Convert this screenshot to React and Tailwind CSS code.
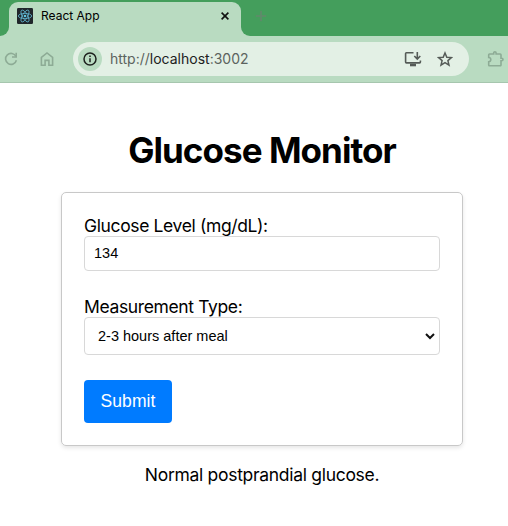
import React from "react";

function ReactLogo() {
  return (
    <svg width="16" height="16" viewBox="0 0 16 16" fill="none" stroke="#61b5d0" strokeWidth="0.8">
      <rect width="16" height="16" rx="1.2" fill="#20262b" stroke="none" />
      <ellipse cx="8" cy="8" rx="6.7" ry="2.6" />
      <ellipse cx="8" cy="8" rx="6.7" ry="2.6" transform="rotate(60 8 8)" />
      <ellipse cx="8" cy="8" rx="6.7" ry="2.6" transform="rotate(120 8 8)" />
      <circle cx="8" cy="8" r="1.3" fill="#61c5e0" stroke="none" />
    </svg>
  );
}

function TabStrip() {
  return (
    <div className="flex h-9 bg-[#449e5c]">
      <div className="flex h-9 w-[9px] items-end bg-[#b9dbc1]">
        <div className="h-9 w-full rounded-br-[9px] bg-[#449e5c]" />
      </div>
      <div className="flex h-9 w-[232px] flex-col bg-[#449e5c] pt-0.5">
        <div className="flex h-[34px] items-center rounded-t-[9px] bg-[#b9dbc1] pb-[6px] pl-2 pr-[11px]">
          <ReactLogo />
          <span className="ml-2 flex-1 whitespace-nowrap text-[12px] leading-4 text-black">React App</span>
          <svg width="10" height="10" viewBox="0 0 10 10" stroke="#111" strokeWidth="1.6">
            <path d="M1.6 1.6 8.4 8.4M8.4 1.6 1.6 8.4" />
          </svg>
        </div>
      </div>
      <div className="flex h-9 flex-1 bg-[#b9dbc1]">
        <div className="flex-1 rounded-bl-[9px] bg-[#449e5c] pl-[14px] pt-[10px]">
          <svg width="12" height="12" viewBox="0 0 12 12" stroke="#61896b" strokeWidth="1.7">
            <path d="M6 .8v10.4M.8 6h10.4" />
          </svg>
        </div>
      </div>
    </div>
  );
}

function Toolbar() {
  return (
    <div className="flex h-[47px] items-center border-b border-[#a6c6ae] bg-[#b9dbc1]">
      <svg className="ml-[4px]" width="14" height="14" viewBox="0 0 14 14" fill="none" stroke="#8dab95" strokeWidth="1.6">
        <path d="M12 4.4A5.5 5.5 0 1 0 12.4 8.2" />
        <path d="M12.2 0.8v4.2H8" />
      </svg>
      <svg className="ml-[22px]" width="14" height="16" viewBox="0 0 14 16" fill="none" stroke="#8dab95" strokeWidth="1.6">
        <path d="M1.4 14.2V6.3L7 1.9l5.6 4.4v7.9H8.9V9.4H5.1v4.8Z" />
      </svg>
      <div className="ml-[19px] flex h-[34px] w-[396px] items-center rounded-full bg-[#e3f0e5] pl-[5px] pr-[16px]">
        <div className="flex h-6 w-6 items-center justify-center rounded-full bg-[#b9dbc1]">
          <svg width="14" height="14" viewBox="0 0 14 14" fill="none" stroke="#1d211e" strokeWidth="1.5">
            <circle cx="7" cy="7" r="6" />
            <path d="M7 6.3v4M7 3.5v1.6" />
          </svg>
        </div>
        <span className="ml-2 flex-1 whitespace-nowrap text-[14px] leading-5 text-[#5c635e]">
          http://<span className="text-[#1d211e]">localhost</span>:3002
        </span>
        <svg width="18" height="16" viewBox="0 0 18 16" fill="none" stroke="#555b57" strokeWidth="1.6">
          <path d="M9.5 1.8H2.4a.8.8 0 0 0-.8.8v8.5c0 .5.3.8.8.8h13.2c.5 0 .8-.3.8-.8V9.6" />
          <path d="M13.3.9v6.6M10.3 5l3 3 3-3" />
          <path d="M6 14h6" strokeWidth="2.6" />
        </svg>
        <svg className="ml-[15px]" width="16" height="16" viewBox="0 0 16 16" fill="none" stroke="#555b57" strokeWidth="1.5">
          <path d="m8 2 1.8 4.2 4.6.4-3.5 3 1.1 4.5L8 11.7l-4 2.4 1.1-4.5-3.5-3 4.6-.4Z" />
        </svg>
      </div>
      <svg className="ml-[18px] shrink-0" width="19" height="18" viewBox="0 0 19 18" fill="none" stroke="#8dab95" strokeWidth="1.6">
        <path d="M2.5 4h4.2V3a1.2 1.2 0 0 1 2.4 0v1h4.1a.8.8 0 0 1 .8.8v3.4h.7a1.2 1.2 0 0 1 0 2.6H14v4.2a.8.8 0 0 1-.8.8H2.5a.8.8 0 0 1-.8-.8v-3.3a2.1 2.1 0 0 0 0-4.2V4.8a.8.8 0 0 1 .8-.8Z" />
      </svg>
    </div>
  );
}

export default function App() {
  return (
    <div className="h-[526px] w-[508px] overflow-hidden bg-white font-['Inter',sans-serif] text-black">
      <TabStrip />
      <Toolbar />
      <main className="flex flex-col items-center pl-4">
        <h1 className="mt-[46px] whitespace-nowrap text-[35px] font-bold leading-[42px] tracking-[-0.95px]">Glucose Monitor</h1>
        <form className="mt-[21px] flex h-[254px] w-[402px] flex-col items-start rounded-[5px] border border-[#c8c8c8] px-[22px] pt-[23px] shadow-[0_2px_4px_rgba(0,0,0,0.1)]">
          <label className="h-5 whitespace-nowrap text-[17.5px] leading-5 tracking-[-0.37px]">Glucose Level (mg/dL):</label>
          <input
            className="h-[35px] w-full rounded-[4px] border border-[#d8d8d8] pb-[2px] pl-[9px] font-['Liberation_Sans',Arial,sans-serif] text-[14.5px]"
            defaultValue="134"
          />
          <label className="mt-[26px] h-5 whitespace-nowrap text-[17.5px] leading-5 tracking-[-0.37px]">Measurement Type:</label>
          <div className="flex h-[38px] w-full items-center rounded-[4px] border border-[#d8d8d8] pl-[13px] pr-[4px] font-['Liberation_Sans',Arial,sans-serif] text-[14.5px]">
            <span className="flex-1 pt-[2px]">2-3 hours after meal</span>
            <svg width="10" height="8" viewBox="0 0 10 8" fill="none" stroke="#111" strokeWidth="2">
              <path d="m1 2 4 4 4-4" />
            </svg>
          </div>
          <button
            type="button"
            className="mt-[25px] h-[43px] w-[88px] rounded-[4px] bg-[#007bff] font-['Liberation_Sans',Arial,sans-serif] text-[17.5px] tracking-[0.1px] text-white"
          >
            Submit
          </button>
        </form>
        <p className="mt-[19px] whitespace-nowrap text-[17.5px] leading-5 tracking-[-0.3px]">Normal postprandial glucose.</p>
      </main>
    </div>
  );
}
